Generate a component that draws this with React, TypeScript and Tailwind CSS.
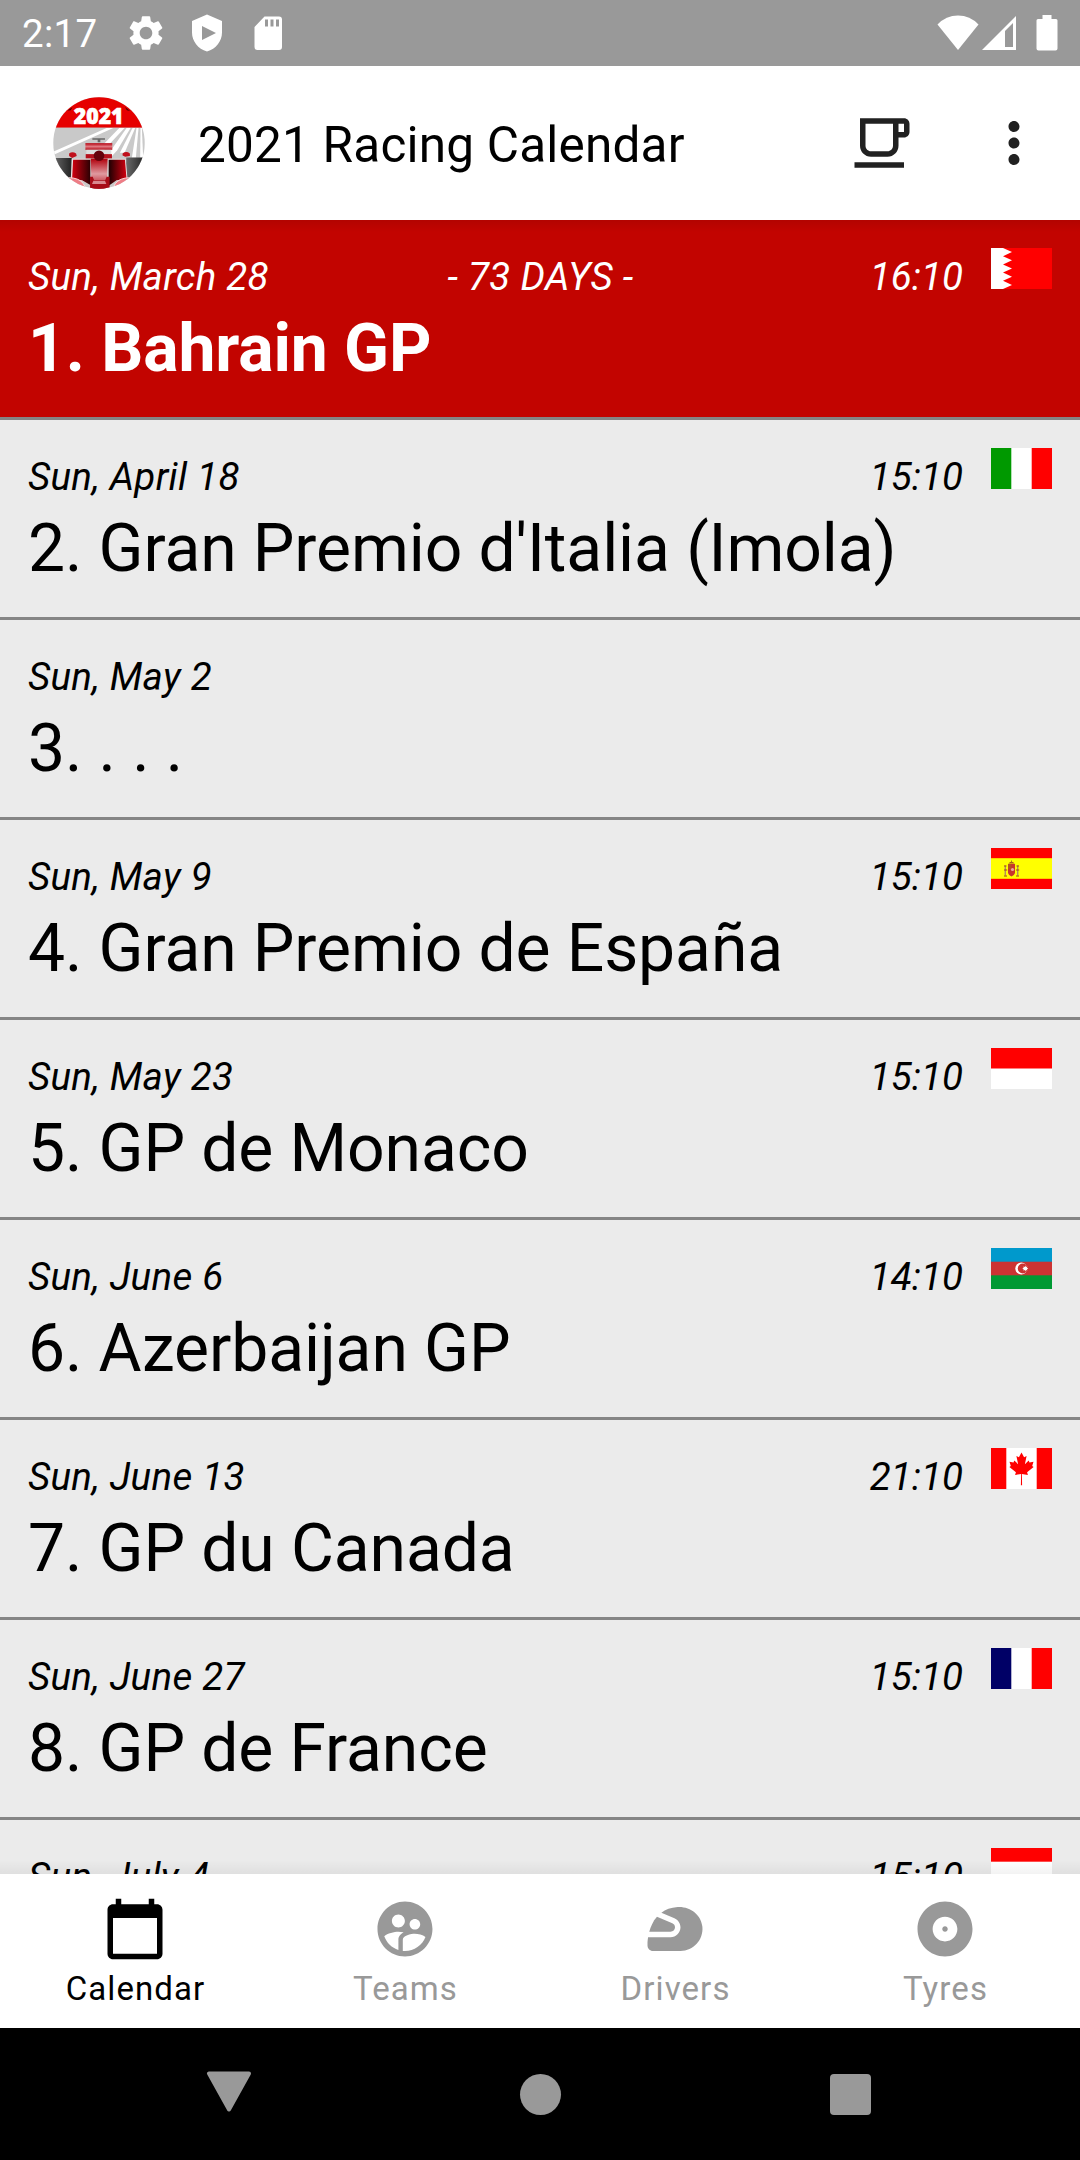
import React, { useState } from "react";
import {
  MdAlbum,
  MdCalendarToday,
  MdMoreVert,
  MdOutlineLocalCafe,
  MdSettings,
  MdSportsMotorsports,
  MdSupervisedUserCircle,
} from "react-icons/md";

type Country = "bh" | "it" | "es" | "mc" | "az" | "ca" | "fr" | "at";

interface Race {
  round: number;
  name?: string;
  date: string;
  time?: string;
  country?: Country;
  countdown?: string;
}

const races: Race[] = [
  { round: 1, name: "Bahrain GP", date: "Sun, March 28", time: "16:10", country: "bh", countdown: "- 73 DAYS -" },
  { round: 2, name: "Gran Premio d'Italia (Imola)", date: "Sun, April 18", time: "15:10", country: "it" },
  { round: 3, name: ". . .", date: "Sun, May 2" },
  { round: 4, name: "Gran Premio de España", date: "Sun, May 9", time: "15:10", country: "es" },
  { round: 5, name: "GP de Monaco", date: "Sun, May 23", time: "15:10", country: "mc" },
  { round: 6, name: "Azerbaijan GP", date: "Sun, June 6", time: "14:10", country: "az" },
  { round: 7, name: "GP du Canada", date: "Sun, June 13", time: "21:10", country: "ca" },
  { round: 8, name: "GP de France", date: "Sun, June 27", time: "15:10", country: "fr" },
  { round: 9, date: "Sun, July 4", time: "15:10", country: "at" },
];

const tabs = [
  { id: "calendar", label: "Calendar", icon: MdCalendarToday },
  { id: "teams", label: "Teams", icon: MdSupervisedUserCircle },
  { id: "drivers", label: "Drivers", icon: MdSportsMotorsports },
  { id: "tyres", label: "Tyres", icon: MdAlbum },
];

// Flags are all drawn on a 61x41 canvas
const flags: Record<Country, React.ReactNode> = {
  bh: (
    <>
      <rect width="61" height="41" fill="#f00" />
      <path d="M0 0h12l9 4.1-9 4.1 9 4.1-9 4.1 9 4.1-9 4.1 9 4.1-9 4.1 9 4.1-9 4.1H0z" fill="#fff" />
    </>
  ),
  it: (
    <>
      <rect width="61" height="41" fill="#fff" />
      <rect width="20.3" height="41" fill="#090" />
      <rect x="40.7" width="20.3" height="41" fill="#f00" />
    </>
  ),
  es: (
    <>
      <rect width="61" height="41" fill="#f00" />
      <rect y="10.2" width="61" height="20.6" fill="#ff0" />
      <path d="M17 16h7v9q-1 3-3.500 3.500Q18 28 17 25z" fill="#c8362c" />
      <path d="M17 16h3.500v5H17z" fill="#b5501f" />
      <circle cx="21.500" cy="21.500" r="1.600" fill="#e9a9a0" />
      <path d="M17.200 15.500q3.300-3.500 6.600 0z" fill="#a8501c" />
      <path d="M20.500 12.500v2" stroke="#a87a1c" />
      <path d="M14.300 17.500v10M26.700 17.500v10" stroke="#b08f60" strokeWidth="1.400" />
      <path d="M13 22h3.200M25 22h3.200M13 18h2.500M25.500 18h2.500M13 28h3M25 28h3" stroke="#a8401c" strokeWidth="1.200" />
    </>
  ),
  mc: (
    <>
      <rect width="61" height="41" fill="#fff" />
      <rect width="61" height="20.500" fill="#f00" />
    </>
  ),
  az: (
    <>
      <rect width="61" height="41" fill="#093" />
      <rect width="61" height="27.300" fill="#c33" />
      <rect width="61" height="13.700" fill="#09c" />
      <circle cx="30.300" cy="20.500" r="6" fill="#fff" />
      <circle cx="31.800" cy="20.500" r="5" fill="#c33" />
      <path d="M34.300 17.500l.6 1.400 1.500-.5-.5 1.400 1.400.7-1.400.7.5 1.400-1.500-.5-.6 1.400-.6-1.400-1.500.5.5-1.400-1.400-.7 1.400-.7-.5-1.400 1.500.5z" fill="#fff" />
    </>
  ),
  ca: (
    <>
      <rect width="61" height="41" fill="#fff" />
      <rect width="15.300" height="41" fill="#f00" />
      <rect x="45.700" width="15.300" height="41" fill="#f00" />
      <path
        d="M30.500 4.500l-2.600 4.700-2.500-1.200 1.700 8.200-3.800-3.700-.8 2-4-.7 1.300 4.300-1.400 1 6.500 5.200-.8 2.600 6-.9-.2 11.300h1.200l-.2-11.300 6 .9-.8-2.600 6.500-5.200-1.400-1 1.300-4.300-4 .7-.8-2-3.800 3.700 1.700-8.200-2.500 1.200z"
        fill="#f00"
      />
    </>
  ),
  fr: (
    <>
      <rect width="61" height="41" fill="#fff" />
      <rect width="20.300" height="41" fill="#006" />
      <rect x="40.700" width="20.300" height="41" fill="#f00" />
    </>
  ),
  at: (
    <>
      <rect width="61" height="41" fill="#f00" />
      <rect y="13.700" width="61" height="13.700" fill="#fff" />
    </>
  ),
};

function Flag({ country }: { country: Country }) {
  return (
    <svg className="block h-[41px] w-[61px]" viewBox="0 0 61 41">
      {flags[country]}
    </svg>
  );
}

function Logo() {
  return (
    <svg className="block h-[92px] w-[92px]" viewBox="69 50 276 277">
      <defs>
        <clipPath id="disc">
          <circle cx="207" cy="188.500" r="138" />
        </clipPath>
        <linearGradient id="wing" x1="0" x2="0" y1="0" y2="1">
          <stop offset="0" stopColor="#b5000e" />
          <stop offset="0.500" stopColor="#e07880" />
          <stop offset="1" stopColor="#b5101c" />
        </linearGradient>
        <linearGradient id="nose" x1="0" x2="0" y1="0" y2="1">
          <stop offset="0" stopColor="#b0000c" />
          <stop offset="0.500" stopColor="#e09aa0" />
          <stop offset="1" stopColor="#b0000c" />
        </linearGradient>
        <linearGradient id="podLeft">
          <stop offset="0" stopColor="#d2000f" />
          <stop offset="1" stopColor="#2a0003" />
        </linearGradient>
        <linearGradient id="podRight">
          <stop offset="0" stopColor="#1c0002" />
          <stop offset="1" stopColor="#d2000f" />
        </linearGradient>
        <linearGradient id="tyre">
          <stop offset="0" stopColor="#6a6a6a" />
          <stop offset="1" stopColor="#222" />
        </linearGradient>
      </defs>
      <g clipPath="url(#disc)">
        <rect x="69" y="50" width="276" height="277" fill="#c9c9c9" />
        {/* track lines */}
        <g fill="#fff">
          <path d="M230 143h20L69 225v-10z" />
          <path d="M268 143h16L214 218h-18z" />
          <path d="M290 143h12L262 210l-20 22h-14z" />
          <path d="M308 143h8L284 218h-14z" />
          <path d="M320 143h6l-8 90h-12z" />
          <path d="M332 143h4l4 90h-9z" />
        </g>
        <rect x="69" y="50" width="276" height="92" fill="#e60000" />
        <path d="M112 91l15-10-5 9zM285 80l16 12-10-2z" fill="#400" />
        <text
          x="131"
          y="130"
          textLength="150"
          lengthAdjust="spacingAndGlyphs"
          fill="#fff"
          stroke="#fff"
          strokeWidth="2"
          className="font-['Open_Sans',sans-serif] text-[67px] font-extrabold"
        >
          2021
        </text>
        {/* rear tyres */}
        <path d="M69 234h56v60l-20 12-36-30z" fill="url(#tyre)" />
        <path d="M289 232h56v50l-36 28-20-14z" fill="url(#tyre)" />
        {/* rear wing and airbox */}
        <path d="M187 174h38v5h-14v7h-8v-7h-16z" fill="#666" />
        <rect x="166" y="189" width="81" height="20" fill="url(#wing)" />
        <rect x="169" y="209" width="75" height="13" fill="#ddd" />
        <rect x="167" y="222" width="79" height="13" fill="#b5101c" />
        <path d="M117 220q10-8 21 0l2 8-14 6-9-6zM278 220q11-9 22 0v8l-14 2-8-4z" fill="#c0101c" />
        {/* side pods */}
        <path d="M125 236h58v78l-28-12-33-4z" fill="#e9e3e3" />
        <path d="M233 236h54l6 62-34 4-26 14z" fill="#e9e3e3" />
        <path d="M129 239h52v76l-25-14-30-4z" fill="url(#podLeft)" />
        <path d="M236 239h49l5 58-30 4-24 16z" fill="url(#podRight)" />
        <path d="M116 293q30 0 44 18l8 16h-60z" fill="#ee7d86" stroke="#f7d9db" strokeWidth="3" />
        <path d="M300 293q-30 0-44 18l-8 16h60z" fill="#ee7d86" stroke="#f7d9db" strokeWidth="3" />
        {/* nose */}
        <path d="M182 236h51l-3 91h-45z" fill="url(#nose)" />
        <path d="M180 290h8l4 10h34l4-10h9v37h-59z" fill="#a80c18" />
        <path d="M190 302h35l4 10h-43z" fill="#d98990" />
        <circle cx="207" cy="227" r="16" fill="#65000a" />
      </g>
    </svg>
  );
}

function StatusBar() {
  return (
    <div className="flex h-[66px] shrink-0 items-center justify-between bg-[#999] text-white">
      <div className="flex items-center pl-[22px]">
        <span className="w-[103px] pt-[2px] text-[38.5px] leading-[64px] tracking-[0.3px]">2:17</span>
        <MdSettings className="size-[42px]" />
        <svg className="ml-[24px] h-[38px] w-[32px]" viewBox="0 0 32 38">
          <path
            fillRule="evenodd"
            d="M16 0.500L31 7v11.500C31 27 25 35 16 37.500 7 35 1 27 1 18.500V7zM11 12v14l14-7z"
            fill="currentColor"
          />
        </svg>
        <svg className="ml-[31px] h-[35px] w-[28px]" viewBox="0 0 28 35">
          <path
            fillRule="evenodd"
            d="M10.500 0.500H25a3 3 0 0 1 3 3V31a3 3 0 0 1-3 3H3.500a3 3 0 0 1-3-3V11zM11 3.500v7h3v-7zM16.500 3.500v7h3v-7zM22 3.500v7h3v-7z"
            fill="currentColor"
          />
        </svg>
      </div>
      <div className="flex items-center pr-[22px]">
        <svg className="h-[36px] w-[42px]" viewBox="0 0 42 36">
          <path d="M0.500 9.500Q9 0.500 21 0.500T41.500 9.500L21 35z" fill="currentColor" />
        </svg>
        <svg className="ml-[3px] h-[36px] w-[35px]" viewBox="0 0 35 36">
          <path fillRule="evenodd" d="M0 35L34 1v34zM23 16v16h8V8z" fill="currentColor" />
        </svg>
        <svg className="ml-[19px] h-[36px] w-[22px]" viewBox="0 0 22 36">
          <path d="M6.500 0h9v4H20a1.500 1.500 0 0 1 1.500 1.500v28A2 2 0 0 1 19.500 35.500h-17A2 2 0 0 1 .5 33.500v-28A1.500 1.500 0 0 1 2 4h4.500z" fill="currentColor" />
        </svg>
      </div>
    </div>
  );
}

function RaceRow({ race, isNext }: { race: Race; isNext: boolean }) {
  return (
    <li
      className={`h-[200px] shrink-0 border-b-[3px] border-[#858585] px-[28px] pt-[28px] ${
        isNext ? "bg-[#c20400] text-white" : "bg-[#ebebeb] text-black"
      }`}
    >
      <div className="flex h-[51px] items-start text-[38.5px] leading-[45px] italic">
        <div className="grid flex-1 grid-cols-3 pt-[6px]">
          <span className="tracking-[0.3px] whitespace-nowrap">{race.date}</span>
          <span className="pl-[90px] text-center tracking-[0.35px] whitespace-nowrap">{race.countdown}</span>
          <span className="text-right">{race.time}</span>
        </div>
        <div className="ml-[28px] w-[61px]">{race.country && <Flag country={race.country} />}</div>
      </div>
      {race.name && (
        <h2
          className={`mt-[11px] text-[66px] leading-[77px] tracking-[-0.1px] whitespace-nowrap ${
            isNext ? "font-bold" : "font-normal"
          }`}
        >
          {race.round}. {race.name}
        </h2>
      )}
    </li>
  );
}

export default function App() {
  const [activeTab, setActiveTab] = useState("calendar");

  return (
    <div className="flex h-[2160px] w-[1080px] flex-col overflow-hidden bg-white font-[Roboto,sans-serif]">
      <StatusBar />

      {/* App bar */}
      <header className="flex h-[154px] shrink-0 items-center bg-white pr-[33px] pl-[53px]">
        <Logo />
        <h1 className="ml-[53px] flex-1 pt-[3px] text-[49.5px] leading-[58px] tracking-[0.2px] text-black">
          2021 Racing Calendar
        </h1>
        <button>
          <MdOutlineLocalCafe className="size-[66px] text-[#212121]" />
        </button>
        <button className="ml-[66px]">
          <MdMoreVert className="size-[66px] text-[#212121]" />
        </button>
      </header>

      {/* Race list */}
      <main className="relative flex-1 overflow-hidden">
        <ul className="flex flex-col">
          {races.map((race) => (
            <RaceRow key={race.round} race={race} isNext={!!race.countdown} />
          ))}
        </ul>
        <div className="absolute inset-x-0 top-0 h-[12px] bg-gradient-to-b from-black/8 to-transparent" />
        <div className="absolute inset-x-0 bottom-0 h-[14px] bg-gradient-to-t from-black/5 to-transparent" />
      </main>

      {/* Bottom tabs */}
      <nav className="grid h-[154px] shrink-0 grid-cols-4 bg-white">
        {tabs.map(({ id, label, icon: Icon }) => (
          <button
            key={id}
            onClick={() => setActiveTab(id)}
            className={`flex flex-col items-center pt-[22px] ${activeTab === id ? "text-black" : "text-[#999]"}`}
          >
            <Icon className="size-[66px]" />
            <span className="mt-[7px] pl-[1px] text-[33px] leading-[39px] tracking-[1.1px]">{label}</span>
          </button>
        ))}
      </nav>

      {/* System navigation */}
      <div className="flex h-[132px] shrink-0 items-center bg-black pl-[206px] text-[#999]">
        <svg className="mb-[6px] h-[41px] w-[46px]" viewBox="0 0 46 41">
          <path d="M3 2.500h40L23 38.500z" fill="currentColor" stroke="currentColor" strokeWidth="4" strokeLinejoin="round" />
        </svg>
        <div className="ml-[268px] size-[41px] rounded-full bg-[#999]" />
        <div className="ml-[269px] size-[41px] rounded-[4px] bg-[#999]" />
      </div>
    </div>
  );
}
